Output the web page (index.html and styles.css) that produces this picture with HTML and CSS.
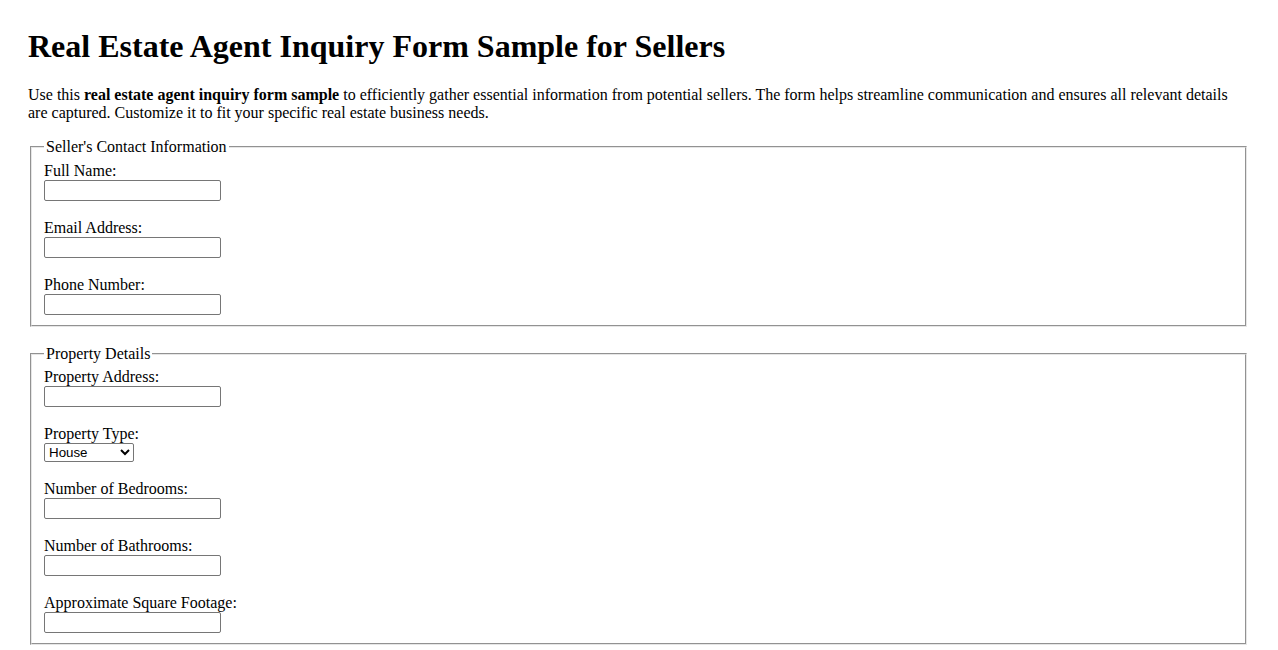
FILE: index.html
```html
<!DOCTYPE html>
<html lang="en">
<head>
<meta charset="utf-8">
<title>Real Estate Agent Inquiry Form Sample for Sellers</title>
<link rel="stylesheet" href="styles.css">
</head>
<body>
<div class="page">
<h1 class="title">Real Estate Agent Inquiry Form Sample for Sellers</h1>
<p class="intro">Use this <strong>real estate agent inquiry form sample</strong> to efficiently gather essential information from potential sellers. The form helps streamline communication and ensures all relevant details are captured. Customize it to fit your specific real estate business needs.</p>
<form class="form">
<fieldset class="group">
<legend class="legend">Seller's Contact Information</legend>
<label class="label" for="name">Full Name:</label><br>
<input class="field" type="text" id="name"><br><br>
<label class="label" for="email">Email Address:</label><br>
<input class="field" type="email" id="email"><br><br>
<label class="label" for="phone">Phone Number:</label><br>
<input class="field" type="tel" id="phone">
</fieldset>
<br>
<fieldset class="group">
<legend class="legend">Property Details</legend>
<label class="label" for="address">Property Address:</label><br>
<input class="field" type="text" id="address"><br><br>
<label class="label" for="type">Property Type:</label><br>
<select class="choice" id="type">
<option>House</option>
<option>Apartment</option>
<option>Condo</option>
<option>Townhouse</option>
</select><br><br>
<label class="label" for="bed">Number of Bedrooms:</label><br>
<input class="field" type="number" id="bed"><br><br>
<label class="label" for="bath">Number of Bathrooms:</label><br>
<input class="field" type="number" id="bath"><br><br>
<label class="label" for="sqft">Approximate Square Footage:</label><br>
<input class="field" type="number" id="sqft">
</fieldset>
</form>
</div>
</body>
</html>
```

FILE: styles.css
```css
html, body {
  background: #ffffff;
}
body {
  margin: 8px;
  font-family: "Liberation Serif", "Times New Roman", serif;
  font-size: 16px;
  color: #000000;
}
.page {
  padding: 0 21px 0 20px;
}
.title {
  font-size: 32px;
  font-weight: bold;
  margin: 20px 0 21px;
}
.intro {
  margin: 16px 0;
}
.group {
  margin: 0 2px;
  padding: 0.35em 0.75em 0.625em;
  border: 2px groove #e6e6e6;
}
.legend {
  padding: 0 2px;
}
.label {
  line-height: 18px;
}
.field {
  box-sizing: border-box;
  width: 177px;
  height: 21px;
  font-family: "Liberation Sans", Arial, sans-serif;
  font-size: 13.33px;
  border: 1px solid #767676;
  border-radius: 2px;
  padding: 1px 2px;
  margin: 0;
  background: #ffffff;
}
.choice {
  box-sizing: border-box;
  width: 90px;
  height: 19px;
  font-family: "Liberation Sans", Arial, sans-serif;
  font-size: 13.33px;
  border: 1px solid #767676;
  border-radius: 2px;
  margin: 0;
  background: #ffffff;
  color: #000000;
}
```
